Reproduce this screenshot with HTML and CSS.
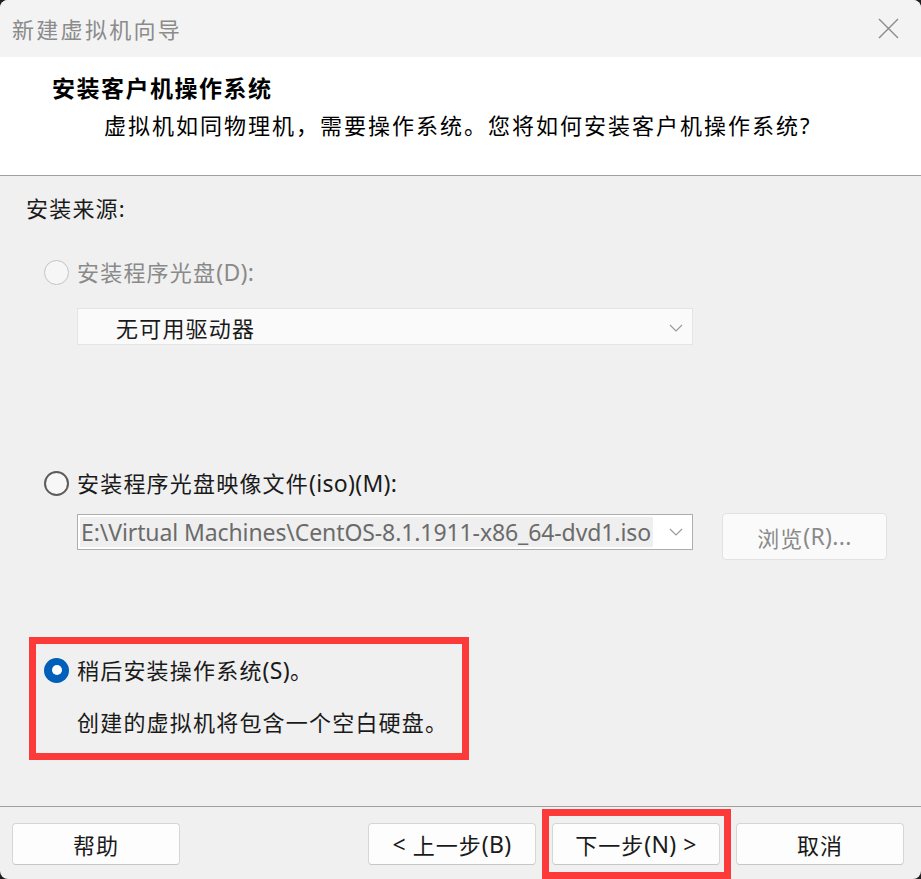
FILE: index.html
```html
<!DOCTYPE html>
<html lang="zh-CN">
<head>
<meta charset="utf-8">
<title>新建虚拟机向导</title>
<link rel="stylesheet" href="styles.css">
</head>
<body>
<div class="window">
  <div class="titlebar">
    <span class="title">新建虚拟机向导</span>
    <svg class="close" width="21" height="21" viewBox="0 0 21 21"><path d="M1 1 L20 20 M20 1 L1 20" stroke="#8a8a8a" stroke-width="1.4" fill="none"/></svg>
  </div>
  <div class="header">
    <h1 class="h-title">安装客户机操作系统</h1>
    <p class="h-sub">虚拟机如同物理机，需要操作系统。您将如何安装客户机操作系统?</p>
  </div>
  <div class="sep"></div>
  <div class="content">
    <div class="section-label">安装来源:</div>

    <div class="option disabled opt1">
      <span class="radio radio-disabled"></span>
      <span class="label">安装程序光盘<span class="lat">(D):</span></span>
    </div>
    <div class="select">
      <span class="select-text">无可用驱动器</span>
      <svg class="chev" width="14" height="8" viewBox="0 0 14 8"><polyline points="1,1 7,7 13,1" fill="none" stroke="#9a9a9a" stroke-width="1.2"/></svg>
    </div>

    <div class="option opt2">
      <span class="radio"></span>
      <span class="label">安装程序光盘映像文件<span class="lat">(iso)(M):</span></span>
    </div>
    <div class="iso-row">
      <div class="combo">
        <span class="combo-text">E:\Virtual Machines\CentOS-8.1.1911-x86_64-dvd1.iso</span>
        <svg class="chev" width="14" height="8" viewBox="0 0 14 8"><polyline points="1,1 7,7 13,1" fill="none" stroke="#9a9a9a" stroke-width="1.2"/></svg>
      </div>
      <div class="browse">浏览<span class="lat">(R)...</span></div>
    </div>

    <div class="later-box">
      <div class="option">
        <span class="radio radio-checked"></span>
        <span class="label">稍后安装操作系统<span class="lat">(S)</span>。</span>
      </div>
      <div class="later-desc">创建的虚拟机将包含一个空白硬盘。</div>
    </div>
  </div>
  <div class="sep"></div>
  <div class="footer">
    <div class="btn">帮助</div>
    <div class="btn-group">
      <div class="btn"><span class="lat">&lt;</span>&nbsp;上一步<span class="lat">(B)</span></div>
      <div class="btn-wrap"><div class="btn">下一步<span class="lat">(N)</span>&nbsp;<span class="lat">&gt;</span></div></div>
      <div class="btn">取消</div>
    </div>
  </div>
</div>
</body>
</html>
```

FILE: styles.css
```css
* { box-sizing: border-box; }

html, body {
  margin: 0;
  padding: 0;
  background: #1e1e1e;
}

body {
  font-family: "Noto Sans", "Noto Sans CJK SC", sans-serif;
  color: #1a1a1a;
}

.window {
  width: 921px;
  height: 879px;
  border-radius: 8px;
  overflow: hidden;
  background: #f0f0f0;
  display: flex;
  flex-direction: column;
}

.titlebar {
  height: 57px;
  flex: none;
  background: #f3f3f3;
  display: flex;
  align-items: center;
  justify-content: space-between;
  padding: 0 22px 0 12px;
}

.title {
  font-size: 22px;
  letter-spacing: 2.3px;
  color: #8b8b8b;
  line-height: 30px;
}

.close { display: block; }

.header {
  height: 118px;
  flex: none;
  background: #ffffff;
  padding: 16px 0 0 52px;
}

.h-title {
  margin: 0;
  font-size: 23px;
  line-height: 30px;
  font-weight: 700;
  letter-spacing: 1.5px;
  color: #000;
}

.h-sub {
  margin: 7px 0 0 52px;
  font-size: 22px;
  line-height: 30px;
  letter-spacing: 2px;
  color: #000;
}

.sep {
  height: 1px;
  flex: none;
  background: #a0a0a0;
}

.content {
  flex: 1;
  padding: 17px 0 0 26px;
  font-size: 22px;
  letter-spacing: 1.2px;
}

.lat {
  font-size: 23px;
  letter-spacing: 0.3px;
  line-height: 1;
}

.section-label {
  line-height: 30px;
  height: 30px;
}

.option {
  display: flex;
  align-items: center;
  height: 30px;
  line-height: 30px;
}

.opt1 { margin-top: 34px; padding-left: 18px; }
.opt2 { margin-top: 123px; padding-left: 18px; }

.radio {
  width: 25px;
  height: 25px;
  border-radius: 50%;
  border: 2px solid #5c5c5c;
  background: #f7f7f7;
  margin-right: 8px;
  flex: none;
  display: flex;
  align-items: center;
  justify-content: center;
}

.radio-disabled {
  border: 1.5px solid #c4c4c4;
  background: #f6f6f6;
}

.radio-checked {
  border: none;
  background: #005fb8;
}

.radio-checked::after {
  content: "";
  width: 10px;
  height: 10px;
  border-radius: 50%;
  background: #ffffff;
}

.disabled .label { color: #8a8a8a; }

.select {
  margin: 21px 0 0 51px;
  width: 616px;
  height: 37px;
  background: #fafafa;
  border: 1px solid #e4e4e4;
  display: flex;
  align-items: center;
  justify-content: space-between;
  padding: 2px 9px 0 38px;
}

.select-text { line-height: 30px; }

.chev { display: block; flex: none; }

.iso-row {
  margin: 15px 0 0 51px;
  display: flex;
  align-items: flex-start;
  gap: 29px;
}

.combo {
  margin-top: 1px;
  width: 616px;
  height: 36px;
  background: #ffffff;
  border: 1px solid #adadad;
  display: flex;
  align-items: center;
  padding: 2px 9px 2px 2px;
}

.combo-text {
  width: 578px;
  height: 30px;
  line-height: 30px;
  background: #efefef;
  color: #6b6b6b;
  font-size: 23px;
  letter-spacing: -0.1px;
  padding-left: 1px;
  white-space: nowrap;
  overflow: hidden;
  margin-right: 16px;
}

.browse {
  width: 165px;
  height: 47px;
  background: #fafafa;
  border: 1px solid #e2e2e2;
  border-radius: 4px;
  display: flex;
  align-items: center;
  justify-content: center;
  color: #8a8a8a;
  font-size: 22px;
  letter-spacing: 1px;
}

.later-box {
  margin: 77px 0 0 3px;
  width: 440px;
  height: 123px;
  border: 7px solid #fd3a3a;
  padding: 11px 0 0 8px;
}

.later-desc {
  margin-top: 22px;
  padding-left: 33px;
  line-height: 30px;
}

.footer {
  height: 72px;
  flex: none;
  padding: 16px 17px 0 12px;
  display: flex;
  align-items: flex-start;
  justify-content: space-between;
}

.btn-group {
  display: flex;
  gap: 16px;
}

.btn {
  width: 168px;
  height: 42px;
  background: #fdfdfd;
  border: 1px solid #d6d6d6;
  border-bottom-color: #c6c6c6;
  border-radius: 4px;
  display: flex;
  align-items: center;
  justify-content: center;
  font-size: 22px;
  letter-spacing: 1px;
  color: #1a1a1a;
  white-space: nowrap;
}

.btn-wrap {
  position: relative;
}

.btn-wrap::after {
  content: "";
  position: absolute;
  top: -14px;
  left: -10px;
  right: -11px;
  bottom: -14px;
  border: 7px solid #fd3a3a;
  pointer-events: none;
}
```
